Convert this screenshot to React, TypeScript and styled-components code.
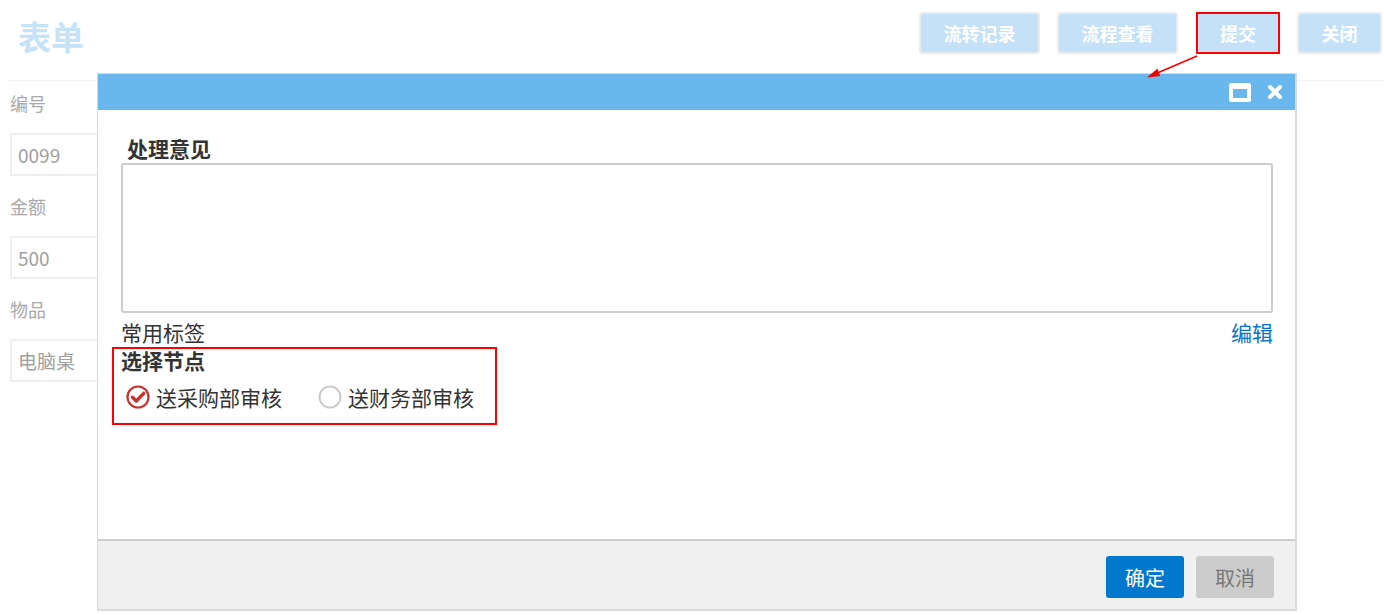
import { FC } from 'react'
import styled, { createGlobalStyle } from 'styled-components'

const GlobalStyle = createGlobalStyle`
  html, body {
    margin: 0;
    padding: 0;
    background: #fff;
    font-family: 'Noto Sans CJK SC', 'Noto Sans', sans-serif;
  }
`

const topActions = [
  { label: '流转记录', width: 121 },
  { label: '流程查看', width: 121 },
  { label: '提交', width: 84, marked: true },
  { label: '关闭', width: 85 },
]

const fields = [
  { label: '编号', value: '0099' },
  { label: '金额', value: '500' },
  { label: '物品', value: '电脑桌' },
]

const nodes = [
  { label: '送采购部审核', checked: true },
  { label: '送财务部审核', checked: false },
]

const Radio: FC<{ checked: boolean }> = ({ checked }) =>
  checked ? (
    <svg width='24' height='24' viewBox='0 0 24 24'>
      <circle cx='12' cy='12' r='10.5' fill='none' stroke='#c9302c' strokeWidth='2.2' />
      <path d='M6.5 12.2l3.8 3.8 7.4-7.6' fill='none' stroke='#c9302c' strokeWidth='3.4' strokeLinecap='round' strokeLinejoin='round' />
    </svg>
  ) : (
    <svg width='24' height='24' viewBox='0 0 24 24'>
      <circle cx='12' cy='12' r='10.5' fill='none' stroke='#cccccc' strokeWidth='2' />
    </svg>
  )

export default function App() {
  return (
    <Screen>
      <GlobalStyle />
      <PageHeader>
        <PageTitle>表单</PageTitle>
        <Actions>
          {topActions.map((a) => (
            <TopButton key={a.label} $width={a.width} $marked={a.marked}>
              {a.label}
            </TopButton>
          ))}
        </Actions>
      </PageHeader>
      <Form>
        {fields.map((f) => (
          <Field key={f.label}>
            <FieldLabel>{f.label}</FieldLabel>
            <FieldInput>{f.value}</FieldInput>
          </Field>
        ))}
      </Form>

      <Pointer width='60' height='30' viewBox='0 0 60 30'>
        <line x1='56' y1='2' x2='14' y2='20' stroke='#f00' strokeWidth='1.8' />
        <path d='M6 23.5 L16.5 14.5 L19 22 Z' fill='#e00' />
      </Pointer>

      <Dialog>
        <DialogHeader>
          <svg width='22' height='19' viewBox='0 0 22 19'>
            <path
              fillRule='evenodd'
              fill='#fff'
              d='M2 0h18a2 2 0 0 1 2 2v15a2 2 0 0 1-2 2H2a2 2 0 0 1-2-2V2a2 2 0 0 1 2-2zM4 6v9h14V6z'
            />
          </svg>
          <svg width='16' height='16' viewBox='0 0 16 16'>
            <path d='M3 3l10 10M13 3L3 13' stroke='#fff' strokeWidth='4' strokeLinecap='round' />
          </svg>
        </DialogHeader>
        <DialogBody>
          <SectionTitle $indent>处理意见</SectionTitle>
          <Opinion />
          <TagRow>
            <span>常用标签</span>
            <EditLink>编辑</EditLink>
          </TagRow>
          <NodeBox>
            <SectionTitle>选择节点</SectionTitle>
            <RadioRow>
              {nodes.map((n) => (
                <RadioItem key={n.label}>
                  <Radio checked={n.checked} />
                  {n.label}
                </RadioItem>
              ))}
            </RadioRow>
          </NodeBox>
        </DialogBody>
        <DialogFooter>
          <FooterButton $primary>确定</FooterButton>
          <FooterButton>取消</FooterButton>
        </DialogFooter>
      </Dialog>
    </Screen>
  )
}

const Screen = styled.div`
  position: relative;
  width: 1384px;
  height: 615px;
  overflow: hidden;
`

const PageHeader = styled.div`
  display: flex;
  justify-content: space-between;
  align-items: flex-start;
  height: 81px;
  box-sizing: border-box;
  margin-left: 8px;
  padding: 12px 2px 0 10px;
  border-bottom: 1px solid #f3f3f3;
`

const PageTitle = styled.div`
  font-size: 33px;
  font-weight: 700;
  line-height: 48px;
  color: #c6e2f7;
`

const Actions = styled.div`
  display: flex;
  gap: 17px;
`

const TopButton = styled.div<{ $width: number; $marked?: boolean }>`
  width: ${(p) => p.$width}px;
  height: 42px;
  box-sizing: border-box;
  display: flex;
  align-items: center;
  justify-content: center;
  background: #c4e1f8;
  color: #fff;
  font-size: 18px;
  font-weight: 700;
  border: ${(p) => (p.$marked ? '2px solid #ff0000' : '2px solid #e8ecef')};
  border-radius: ${(p) => (p.$marked ? '0' : '4px')};
  margin-left: ${(p) => (p.$marked ? '1px' : '0')};
`

const Form = styled.div`
  padding: 7px 0 0 10px;
`

const Field = styled.div`
  display: flex;
  flex-direction: column;
  align-items: flex-start;
`

const FieldLabel = styled.div`
  font-size: 18px;
  line-height: 30px;
  color: #a8a8a8;
  margin-bottom: 15px;
`

const FieldInput = styled.div`
  width: 200px;
  height: 43px;
  box-sizing: border-box;
  border: 2px solid #eeeeee;
  padding-left: 6px;
  display: flex;
  align-items: center;
  font-size: 19px;
  color: #a0a0a0;
  margin-bottom: 15px;
`

const Pointer = styled.svg`
  position: absolute;
  left: 1141px;
  top: 54px;
  z-index: 2;
`

const Dialog = styled.div`
  position: absolute;
  left: 97px;
  top: 73px;
  width: 1200px;
  height: 538px;
  box-sizing: border-box;
  border-style: solid;
  border-color: #dadada;
  border-width: 1px 2px 2px 1px;
  background: #fff;
  display: flex;
  flex-direction: column;
`

const DialogHeader = styled.div`
  flex: 0 0 36px;
  background: #6ab7ee;
  display: flex;
  align-items: center;
  justify-content: flex-end;
  gap: 16px;
  padding-right: 12px;
`

const DialogBody = styled.div`
  flex: 1;
  display: flex;
  flex-direction: column;
  padding: 23px 22px 0 23px;
  color: #333;
  font-size: 21px;
`

const SectionTitle = styled.div<{ $indent?: boolean }>`
  font-size: 21px;
  font-weight: 700;
  line-height: ${(p) => (p.$indent ? '30px' : '22px')};
  padding-left: ${(p) => (p.$indent ? '6px' : '0')};
  color: #333;
`

const Opinion = styled.div`
  height: 150px;
  box-sizing: border-box;
  border: 2px solid #cccccc;
  border-radius: 3px;
`

const TagRow = styled.div`
  display: flex;
  justify-content: space-between;
  line-height: 24px;
  margin-top: 7px;
  margin-bottom: 3px;
`

const EditLink = styled.span`
  color: #0a74c9;
`

const NodeBox = styled.div`
  width: 385px;
  box-sizing: border-box;
  margin-left: -9px;
  border: 2px solid #ff0000;
  padding: 0 0 12px 7px;
`

const RadioRow = styled.div`
  display: flex;
  gap: 36px;
  margin-top: 12px;
  padding-left: 5px;
`

const RadioItem = styled.div`
  display: flex;
  align-items: center;
  gap: 6px;
  line-height: 28px;
  font-size: 21px;
  color: #333;
`

const DialogFooter = styled.div`
  flex: 0 0 70px;
  box-sizing: border-box;
  border-top: 2px solid #cccccc;
  background: #f0f0f0;
  display: flex;
  justify-content: flex-end;
  align-items: flex-start;
  gap: 12px;
  padding: 15px 21px 0 0;
`

const FooterButton = styled.div<{ $primary?: boolean }>`
  width: 78px;
  height: 42px;
  display: flex;
  align-items: center;
  justify-content: center;
  border-radius: 3px;
  font-size: 20px;
  background: ${(p) => (p.$primary ? '#0078cd' : '#cccccc')};
  color: ${(p) => (p.$primary ? '#fff' : '#777')};
`
